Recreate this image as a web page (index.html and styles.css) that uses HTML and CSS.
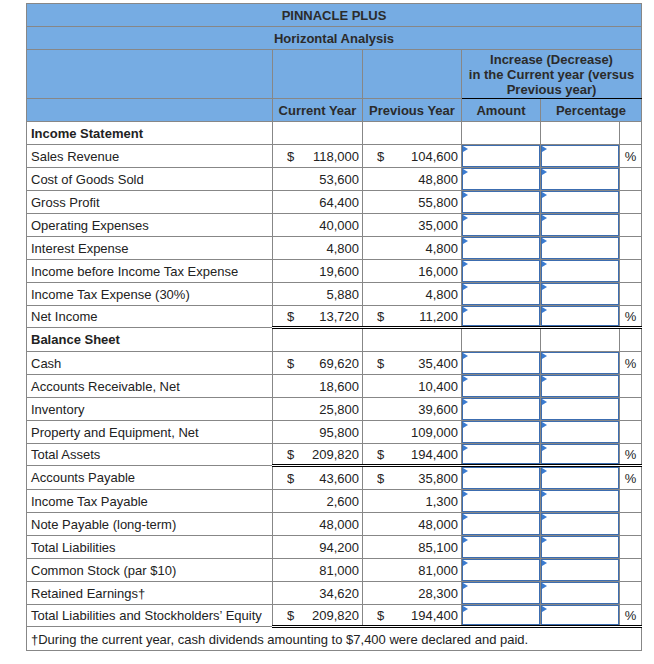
FILE: index.html
```html
<!DOCTYPE html>
<html lang="en">
<head>
<meta charset="utf-8">
<title>Pinnacle Plus – Horizontal Analysis</title>
<link rel="stylesheet" href="styles.css">
</head>
<body>
<div class="page">
<table class="ha">
  <colgroup>
    <col class="c-label"><col class="c-cur"><col class="c-prev"><col class="c-amt"><col class="c-pct"><col class="c-sign">
  </colgroup>
  <thead>
    <tr class="title"><th colspan="6">PINNACLE PLUS</th></tr>
    <tr class="title"><th colspan="6">Horizontal Analysis</th></tr>
    <tr class="head-tall"><th></th><th></th><th></th><th colspan="3" class="incr">Increase (Decrease)<br>in the Current year (versus<br>Previous year)</th></tr>
    <tr class="head"><th></th><th>Current Year</th><th>Previous Year</th><th>Amount</th><th colspan="2">Percentage</th></tr>
  </thead>
  <tbody>
    <tr class="section"><td>Income Statement</td><td></td><td></td><td></td><td></td><td></td></tr>
    <tr><td>Sales Revenue</td><td class="num"><span class="cur">$</span>118,000</td><td class="num"><span class="cur">$</span>104,600</td><td class="inp"><div class="box"></div></td><td class="inp"><div class="box"></div></td><td class="sign">%</td></tr>
    <tr><td>Cost of Goods Sold</td><td class="num">53,600</td><td class="num">48,800</td><td class="inp"><div class="box"></div></td><td class="inp"><div class="box"></div></td><td class="sign"></td></tr>
    <tr class="total"><td>Gross Profit</td><td class="num">64,400</td><td class="num">55,800</td><td class="inp"><div class="box"></div></td><td class="inp"><div class="box"></div></td><td class="sign"></td></tr>
    <tr><td>Operating Expenses</td><td class="num">40,000</td><td class="num">35,000</td><td class="inp"><div class="box"></div></td><td class="inp"><div class="box"></div></td><td class="sign"></td></tr>
    <tr><td>Interest Expense</td><td class="num">4,800</td><td class="num">4,800</td><td class="inp"><div class="box"></div></td><td class="inp"><div class="box"></div></td><td class="sign"></td></tr>
    <tr class="total"><td>Income before Income Tax Expense</td><td class="num">19,600</td><td class="num">16,000</td><td class="inp"><div class="box"></div></td><td class="inp"><div class="box"></div></td><td class="sign"></td></tr>
    <tr><td>Income Tax Expense (30%)</td><td class="num">5,880</td><td class="num">4,800</td><td class="inp"><div class="box"></div></td><td class="inp"><div class="box"></div></td><td class="sign"></td></tr>
    <tr class="total grand"><td>Net Income</td><td class="num"><span class="cur">$</span>13,720</td><td class="num"><span class="cur">$</span>11,200</td><td class="inp"><div class="box"></div></td><td class="inp"><div class="box"></div></td><td class="sign">%</td></tr>
    <tr class="section"><td>Balance Sheet</td><td></td><td></td><td></td><td></td><td></td></tr>
    <tr><td>Cash</td><td class="num"><span class="cur">$</span>69,620</td><td class="num"><span class="cur">$</span>35,400</td><td class="inp"><div class="box"></div></td><td class="inp"><div class="box"></div></td><td class="sign">%</td></tr>
    <tr><td>Accounts Receivable, Net</td><td class="num">18,600</td><td class="num">10,400</td><td class="inp"><div class="box"></div></td><td class="inp"><div class="box"></div></td><td class="sign"></td></tr>
    <tr><td>Inventory</td><td class="num">25,800</td><td class="num">39,600</td><td class="inp"><div class="box"></div></td><td class="inp"><div class="box"></div></td><td class="sign"></td></tr>
    <tr><td>Property and Equipment, Net</td><td class="num">95,800</td><td class="num">109,000</td><td class="inp"><div class="box"></div></td><td class="inp"><div class="box"></div></td><td class="sign"></td></tr>
    <tr class="total grand"><td>Total Assets</td><td class="num"><span class="cur">$</span>209,820</td><td class="num"><span class="cur">$</span>194,400</td><td class="inp"><div class="box"></div></td><td class="inp"><div class="box"></div></td><td class="sign">%</td></tr>
    <tr><td>Accounts Payable</td><td class="num"><span class="cur">$</span>43,600</td><td class="num"><span class="cur">$</span>35,800</td><td class="inp"><div class="box"></div></td><td class="inp"><div class="box"></div></td><td class="sign">%</td></tr>
    <tr><td>Income Tax Payable</td><td class="num">2,600</td><td class="num">1,300</td><td class="inp"><div class="box"></div></td><td class="inp"><div class="box"></div></td><td class="sign"></td></tr>
    <tr><td>Note Payable (long-term)</td><td class="num">48,000</td><td class="num">48,000</td><td class="inp"><div class="box"></div></td><td class="inp"><div class="box"></div></td><td class="sign"></td></tr>
    <tr class="total"><td>Total Liabilities</td><td class="num">94,200</td><td class="num">85,100</td><td class="inp"><div class="box"></div></td><td class="inp"><div class="box"></div></td><td class="sign"></td></tr>
    <tr><td>Common Stock (par $10)</td><td class="num">81,000</td><td class="num">81,000</td><td class="inp"><div class="box"></div></td><td class="inp"><div class="box"></div></td><td class="sign"></td></tr>
    <tr><td>Retained Earnings†</td><td class="num">34,620</td><td class="num">28,300</td><td class="inp"><div class="box"></div></td><td class="inp"><div class="box"></div></td><td class="sign"></td></tr>
    <tr class="grand"><td>Total Liabilities and Stockholders’ Equity</td><td class="num"><span class="cur">$</span>209,820</td><td class="num"><span class="cur">$</span>194,400</td><td class="inp"><div class="box"></div></td><td class="inp"><div class="box"></div></td><td class="sign">%</td></tr>
    <tr class="note"><td colspan="6">†During the current year, cash dividends amounting to $7,400 were declared and paid.</td></tr>
  </tbody>
</table>
</div>
</body>
</html>
```

FILE: styles.css
```css
html, body {
  margin: 0;
  padding: 0;
  background: #fff;
}

.page {
  padding: 3px 0 0 26px;
}

.ha {
  border-collapse: collapse;
  table-layout: fixed;
  width: 615px;
  font-family: "Liberation Sans", Arial, sans-serif;
  font-size: 13px;
  line-height: 15px;
  color: #222;
}

.c-label { width: 246px; }
.c-cur { width: 90px; }
.c-prev { width: 99px; }
.c-amt { width: 79px; }
.c-pct { width: 79px; }
.c-sign { width: 22px; }

.ha th,
.ha td {
  border: 1px solid #878787;
  height: 22px;
  padding: 0 4px;
  vertical-align: middle;
  white-space: nowrap;
  overflow: hidden;
}

.ha thead th {
  background: #76ace3;
  font-weight: bold;
  text-align: center;
  color: #2b2b2b;
}

.ha .head-tall th {
  height: 48px;
  padding: 0 4px;
}

.ha .head-tall .incr {
  border-bottom-color: #000;
}

.ha .section td:first-child {
  font-weight: bold;
}

.ha td.num {
  text-align: right;
  padding: 0 3px 0 14px;
}

.ha .cur {
  float: left;
}

.ha td.inp {
  padding: 0;
}

.ha .box {
  height: 22px;
  box-sizing: border-box;
  border: 1px solid #3c6db0;
}

.ha .grand td {
  height: 20px;
}

.ha .grand .box {
  height: 20px;
}

.ha .box::before {
  content: "";
  display: block;
  width: 0;
  height: 0;
  border-left: 5px solid #3a7bd0;
  border-top: 3px solid transparent;
  border-bottom: 3px solid transparent;
}

.ha td.sign {
  text-align: center;
  padding: 0;
}

.ha .total td:not(:first-child) {
  border-top: 1px solid #000;
}

.ha .grand td:not(:first-child) {
  border-bottom: 3px double #000;
}

.ha .note td {
  padding: 0 4px;
}
```
